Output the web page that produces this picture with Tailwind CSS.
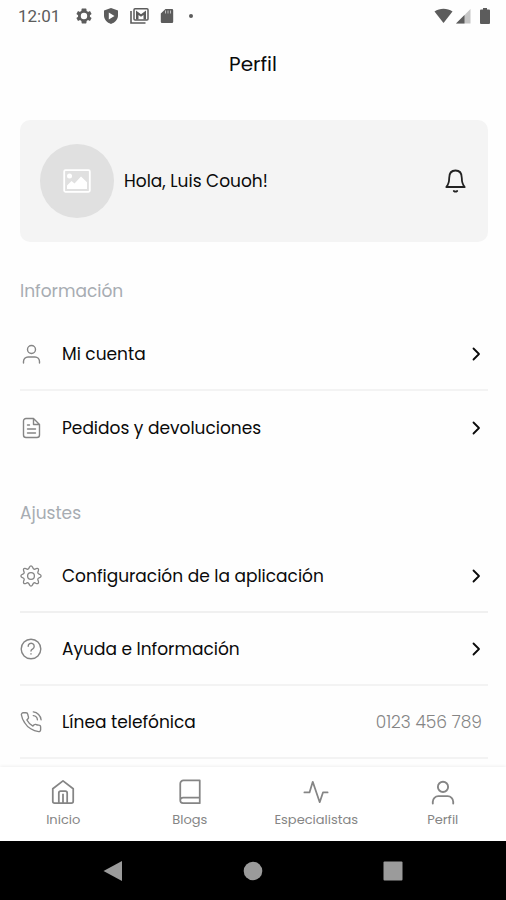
<!DOCTYPE html>
<html lang="es">
<head>
<meta charset="utf-8">
<meta name="viewport" content="width=device-width, initial-scale=1">
<title>Perfil</title>
<script src="https://cdn.jsdelivr.net/npm/@tailwindcss/browser@4"></script>
</head>
<body class="flex min-h-screen flex-col bg-[#fefefe] font-['Poppins','Inter',sans-serif] text-[#0a0a0a]">

<!-- Status bar -->
<div class="flex h-8 items-center pr-4 pl-[18px] text-[#5c5c5c]">
  <span class="w-[58px] font-['Roboto',sans-serif] text-[17px] leading-5">12:01</span>
  <div class="flex flex-1 items-center gap-[11px]">
    <svg class="size-4" viewBox="2 2 20 20" fill="currentColor" aria-hidden="true"><path fill-rule="evenodd" d="M19.4 13c.1-.7.1-1.300 0-2l2.100-1.600-2-3.500-2.500 1a8 8 0 0 0-1.700-1L15 3.300 14.500 2.500h-5L9 3.300 8.700 5.900a8 8 0 0 0-1.700 1l-2.500-1-2 3.500L4.600 11a8 8 0 0 0 0 2l-2.100 1.600 2 3.500 2.500-1a8 8 0 0 0 1.700 1l.4 2.600.4.800h5l.5-.8.3-2.600a8 8 0 0 0 1.700-1l2.500 1 2-3.500zM12 8a4 4 0 1 1 0 8 4 4 0 0 1 0-8z"/></svg>
    <svg class="h-4 w-4" viewBox="0 0 16 16" fill="currentColor" aria-hidden="true"><path fill-rule="evenodd" d="M8 0l7 2.600v5C15 11.500 12 14.800 8 16 4 14.800 1 11.500 1 7.600v-5zM5.800 4.500v7L11.500 8z"/></svg>
    <svg class="h-4 w-[19px]" viewBox="0 0 19 16" aria-hidden="true"><path d="M1 3v12h14.500" fill="none" stroke="currentColor" stroke-width="1.600"/><rect x="4" y=".8" width="14" height="11.200" rx="1" fill="none" stroke="currentColor" stroke-width="1.500"/><path d="M6 11.500V2.500l5 3.700 5-3.700v9h-2.500V7L11 8.800 8.500 7v4.500z" fill="currentColor"/></svg>
    <svg class="h-4 w-[14px]" viewBox="0 0 14 16" aria-hidden="true"><path d="M5.500 1H12a1.200 1.200 0 0 1 1.200 1.200v11.600A1.200 1.200 0 0 1 12 15H2a1.200 1.200 0 0 1-1.200-1.200V5.500z" fill="currentColor"/><path d="M5.500 2.500v3M8 2.500v3M10.500 2.500v3" stroke="#fefefe" stroke-width=".6"/></svg>
    <span class="ml-1 size-1 rounded-full bg-[#5c5c5c]"></span>
  </div>
  <div class="flex items-center">
    <svg class="h-4 w-[19px]" viewBox="0 0 19 16" aria-hidden="true"><path d="M.5 3.500C5.800-.3 13.200-.3 18.500 3.500L9.500 15z" fill="currentColor"/></svg>
    <svg class="ml-[3px] h-4 w-[15px]" viewBox="0 0 15 16" aria-hidden="true"><path d="M0 15.500L14.500 1v14.500z" fill="#c6c6c6"/><path d="M0 15.500l8.500-8.500v8.500z" fill="currentColor"/></svg>
    <svg class="ml-[9px] h-4 w-[10px]" viewBox="0 0 10 16" aria-hidden="true"><path d="M3 0h4v1.500h2a1 1 0 0 1 1 1V15a1 1 0 0 1-1 1H1a1 1 0 0 1-1-1V2.500a1 1 0 0 1 1-1h2z" fill="currentColor"/></svg>
  </div>
</div>

<header class="flex h-16 items-center justify-center">
  <h1 class="text-[20px] leading-6">Perfil</h1>
</header>

<main class="flex-1 pt-6 pr-[18px] pb-2 pl-5">
  <section class="flex items-center rounded-[10px] bg-[#f4f4f4] px-5 py-6">
    <div class="flex size-[74px] items-center justify-center rounded-full bg-[#e0e0e0]">
      <svg class="h-6 w-7" viewBox="0 0 28 24" role="img" aria-label="Foto de perfil"><rect x="1.200" y="1.200" width="25.600" height="21.600" rx="1.200" fill="none" stroke="#fff" stroke-width="1.800"/><circle cx="6.500" cy="7" r="2.500" fill="#fff"/><path d="M4 20v-3.500L8.500 12l3 2.500L18 7.500l6 5.800V20z" fill="#fff"/></svg>
    </div>
    <p class="ml-[10px] flex-1 text-[17px] leading-6">Hola, Luis Couoh!</p>
    <button class="flex size-6 items-center justify-center" aria-label="Notificaciones">
      <svg class="size-6" viewBox="0 0 24 24" fill="none" stroke="#222" stroke-width="1.800" stroke-linejoin="round" stroke-linecap="round" aria-hidden="true"><path d="M5.200 9C5.200 4.500 7.500 1.500 11.500 1.500s6.300 3 6.300 7.500c0 4 1 6.800 2.900 9H2.300c1.900-2.200 2.900-5 2.900-9z"/><path d="M9.800 22q1.700 1.300 3.400 0"/></svg>
    </button>
  </section>

  <section>
    <h2 class="mt-[37px] mb-[15px] text-[17px] leading-6 text-[#a7acb2]">Información</h2>
    <ul>
      <li class="border-b-2 border-[#f3f3f3]"><a href="#cuenta" class="flex h-[71px] items-center pr-[5px]">
        <svg class="size-[22px] text-[#858585]" viewBox="0 0 22 22" fill="none" stroke="currentColor" stroke-width="1.400" stroke-linecap="round" aria-hidden="true"><circle cx="11.500" cy="6.500" r="4"/><path d="M3.500 20v-1.500a4.500 4.500 0 0 1 4.500-4.500h7a4.500 4.500 0 0 1 4.500 4.500V20"/></svg>
        <span class="ml-5 flex-1 text-[17px] leading-6">Mi cuenta</span>
        <svg class="h-4 w-[14px]" viewBox="0 0 14 16" fill="none" stroke="currentColor" stroke-width="1.800" stroke-linecap="round" stroke-linejoin="round" aria-hidden="true"><path d="M4.500 2.500L10 8l-5.500 5.500"/></svg></a></li>
      <li><a href="#pedidos" class="flex h-[73px] items-center pr-[5px]">
        <svg class="size-[22px] text-[#858585]" viewBox="0 0 22 22" fill="none" stroke="currentColor" stroke-width="1.400" stroke-linecap="round" stroke-linejoin="round" aria-hidden="true"><path d="M13.500 1.500H6A2.500 2.500 0 0 0 3.500 4v14A2.500 2.500 0 0 0 6 20.500h11a2.500 2.500 0 0 0 2.500-2.500V7.500zV7.500h6M7.500 8h2M7.500 12h8M7.500 16h8"/></svg>
        <span class="ml-5 flex-1 text-[17px] leading-6">Pedidos y devoluciones</span>
        <svg class="h-4 w-[14px]" viewBox="0 0 14 16" fill="none" stroke="currentColor" stroke-width="1.800" stroke-linecap="round" stroke-linejoin="round" aria-hidden="true"><path d="M4.500 2.500L10 8l-5.500 5.500"/></svg></a></li>
    </ul>
  </section>

  <section>
    <h2 class="mt-[37px] mb-[15px] text-[17px] leading-6 text-[#a7acb2]">Ajustes</h2>
    <ul>
      <li class="border-b-2 border-[#f0f0f0]"><a href="#configuracion" class="flex h-[71px] items-center pr-[5px]">
        <svg class="size-[22px] text-[#858585]" viewBox="0 0 22 22" fill="none" stroke="currentColor" stroke-width="1.300" stroke-linejoin="round" aria-hidden="true"><circle cx="11" cy="11" r="3.400"/><path d="M9.300 2.400Q11-.6 12.700 2.400C13.200 4.300 14.400 4.700 15.900 3.700Q19.400 2.600 18.300 6.100C17.300 7.600 17.700 8.800 19.600 9.300Q22.600 11 19.600 12.700C17.700 13.200 17.300 14.400 18.300 15.900Q19.400 19.400 15.900 18.300C14.400 17.300 13.200 17.700 12.700 19.600Q11 22.600 9.300 19.600C8.800 17.700 7.600 17.300 6.100 18.300Q2.600 19.400 3.700 15.900C4.700 14.400 4.300 13.200 2.400 12.700Q-.6 11 2.400 9.300C4.300 8.800 4.700 7.600 3.700 6.100Q2.600 2.600 6.100 3.700C7.600 4.700 8.800 4.300 9.300 2.400z"/></svg>
        <span class="ml-5 flex-1 text-[17px] leading-6">Configuración de la aplicación</span>
        <svg class="h-4 w-[14px]" viewBox="0 0 14 16" fill="none" stroke="currentColor" stroke-width="1.800" stroke-linecap="round" stroke-linejoin="round" aria-hidden="true"><path d="M4.500 2.500L10 8l-5.500 5.500"/></svg></a></li>
      <li class="border-b-2 border-[#f3f3f3]"><a href="#ayuda" class="flex h-[71px] items-center pr-[5px]">
        <svg class="size-[22px] text-[#858585]" viewBox="0 0 22 22" fill="none" stroke="currentColor" stroke-width="1.400" stroke-linecap="round" stroke-linejoin="round" aria-hidden="true"><circle cx="11" cy="11" r="9.800"/><path d="M8.200 8.300a3 3 0 1 1 4.600 2.500c-1.200.7-1.800 1.100-1.800 2.200M11 15.800v.2"/></svg>
        <span class="ml-5 flex-1 text-[17px] leading-6">Ayuda e Información</span>
        <svg class="h-4 w-[14px]" viewBox="0 0 14 16" fill="none" stroke="currentColor" stroke-width="1.800" stroke-linecap="round" stroke-linejoin="round" aria-hidden="true"><path d="M4.500 2.500L10 8l-5.500 5.500"/></svg></a></li>
      <li class="border-b-2 border-[#f3f3f3]"><a href="tel:0123456789" class="flex h-[71px] items-center pr-[6px]">
        <svg class="size-[22px] text-[#858585]" viewBox="0 0 24 24" fill="none" stroke="currentColor" stroke-width="1.500" stroke-linecap="round" stroke-linejoin="round" aria-hidden="true"><path d="M14.500 5A5 5 0 0 1 19 9.500M14.500 1A9.500 9.500 0 0 1 23 9.500M22.500 17.500v3a2 2 0 0 1-2.200 2 20 20 0 0 1-8.600-3.100 19.500 19.500 0 0 1-6.600-6.600A20 20 0 0 1 1.500 4.100a2 2 0 0 1 2-2.200h3a2 2 0 0 1 2 1.700c.1 1 .4 1.900.7 2.800a2 2 0 0 1-.5 2.100L7.500 9.800a16 16 0 0 0 6.600 6.600l1.300-1.300a2 2 0 0 1 2.100-.4c.9.300 1.800.6 2.800.7a2 2 0 0 1 2.200 2.100z"/></svg>
        <span class="ml-5 flex-1 text-[17px] leading-6">Línea telefónica</span>
        <span class="text-[17px] leading-6 font-light text-[#858585]">0123 456 789</span></a></li>
    </ul>
  </section>
</main>

<div class="sticky bottom-0">
  <nav class="grid grid-cols-4 bg-white pt-3 pb-[11px] text-[#858585] shadow-[0_-1px_3px_rgba(0,0,0,0.06)]" aria-label="Principal">
    <a href="#inicio" class="flex flex-col items-center gap-[5px]">
      <svg class="size-[26px]" viewBox="0 0 28 28" fill="none" stroke="currentColor" stroke-width="1.900" stroke-linejoin="round" aria-hidden="true"><path d="M3 10.500L14 2l11 8.500V24a2 2 0 0 1-2 2h-18a2 2 0 0 1-2-2zM9.500 26V15a2 2 0 0 1 2-2h5a2 2 0 0 1 2 2v11M14 16v10"/></svg>
      <span class="text-[13px] leading-5">Inicio</span></a>
    <a href="#blogs" class="flex flex-col items-center gap-[5px]">
      <svg class="size-[26px]" viewBox="0 0 28 28" fill="none" stroke="currentColor" stroke-width="1.900" stroke-linejoin="round" aria-hidden="true"><path d="M24.500 20V1.500H7a3.500 3.500 0 0 0-3.500 3.500v18M24.500 20H6.500a3 3 0 0 0 0 6h18z"/></svg>
      <span class="text-[13px] leading-5">Blogs</span></a>
    <a href="#especialistas" class="flex flex-col items-center gap-[5px]">
      <svg class="size-[26px]" viewBox="0 0 28 28" fill="none" stroke="currentColor" stroke-width="1.900" stroke-linecap="round" stroke-linejoin="round" aria-hidden="true"><path d="M1.500 14.500h5.500l3.500-11.500 7.500 22 3.500-10.500h5"/></svg>
      <span class="text-[13px] leading-5">Especialistas</span></a>
    <a href="#perfil" aria-current="page" class="flex flex-col items-center gap-[5px]">
      <svg class="size-[26px]" viewBox="0 0 28 28" fill="none" stroke="currentColor" stroke-width="2" stroke-linecap="round" aria-hidden="true"><circle cx="14" cy="8.500" r="5.500"/><path d="M3 26.500v-2a6 6 0 0 1 6-6h10a6 6 0 0 1 6 6v2"/></svg>
      <span class="text-[13px] leading-5">Perfil</span></a>
  </nav>
  <div class="flex h-[59px] items-center justify-center gap-[120px] bg-black text-[#9b9b9b]">
    <button aria-label="Atrás"><svg class="size-5" viewBox="0 0 20 20" fill="currentColor" aria-hidden="true"><path d="M.5 10L19 0v20z"/></svg></button>
    <button aria-label="Inicio"><svg class="size-5" viewBox="0 0 20 20" fill="currentColor" aria-hidden="true"><circle cx="10" cy="10" r="9.300"/></svg></button>
    <button aria-label="Recientes"><svg class="size-5" viewBox="0 0 20 20" fill="currentColor" aria-hidden="true"><rect x=".5" y=".5" width="19" height="19" rx="1"/></svg></button>
  </div>
</div>
</body>
</html>
